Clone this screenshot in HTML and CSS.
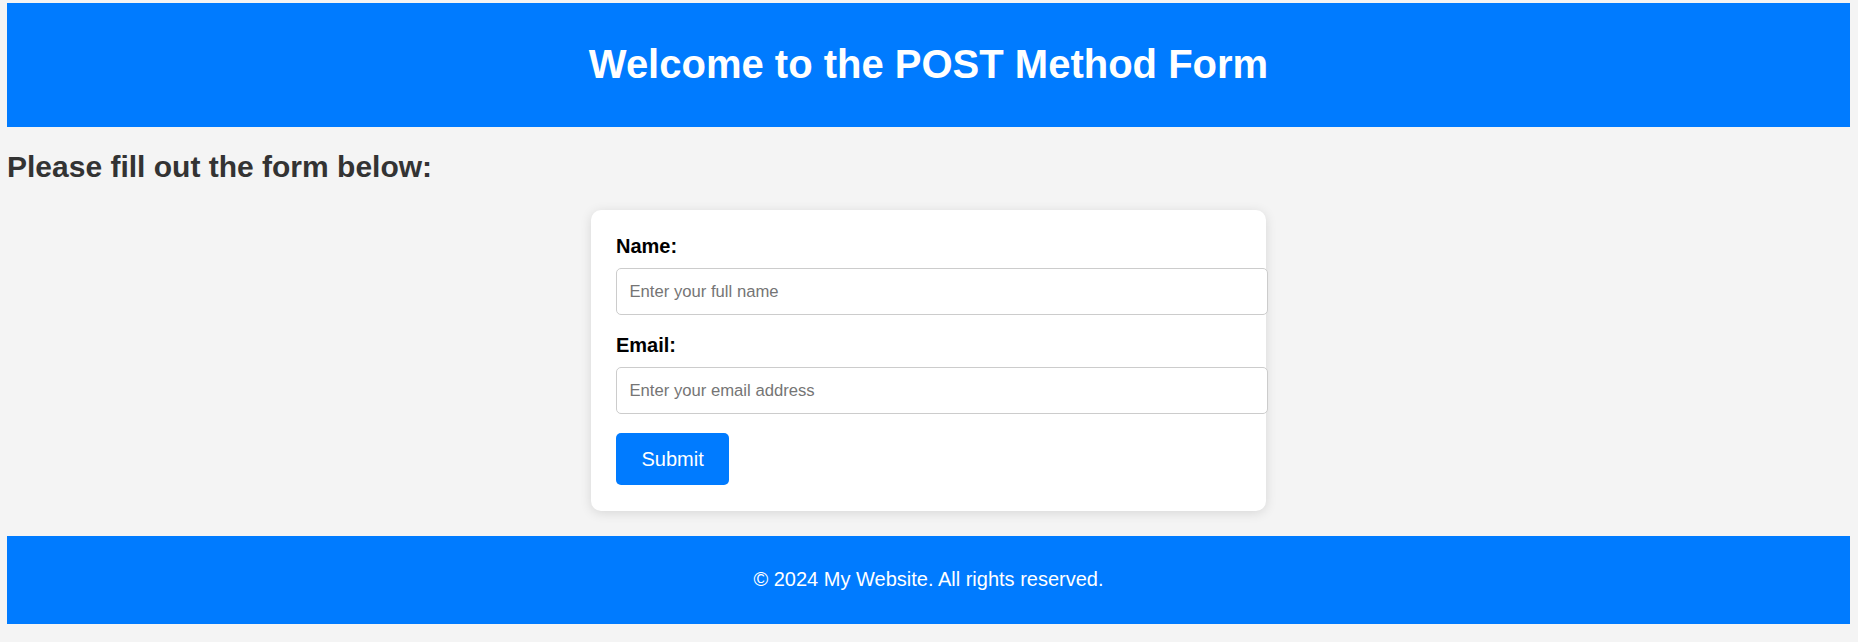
FILE: index.html
```html
<!DOCTYPE html>
<html lang="en">
<head>
<meta charset="utf-8">
<title>POST Method Form</title>
<link rel="stylesheet" href="styles.css">
</head>
<body>
  <header class="site-header">
    <h1 class="site-title">Welcome to the POST Method Form</h1>
  </header>
  <main class="main">
    <h2 class="intro">Please fill out the form below:</h2>
    <form class="card" method="post" action="#">
      <label class="field-label" for="name">Name:</label>
      <input class="field-input" type="text" id="name" name="name" placeholder="Enter your full name">
      <label class="field-label" for="email">Email:</label>
      <input class="field-input" type="email" id="email" name="email" placeholder="Enter your email address">
      <button class="submit-btn" type="submit">Submit</button>
    </form>
  </main>
  <footer class="site-footer">
    <p class="footer-text">&copy; 2024 My Website. All rights reserved.</p>
  </footer>
</body>
</html>
```

FILE: styles.css
```css
html, body {
  background: #f4f4f4;
}
body {
  margin: 3px 8px 0 7px;
  font-family: "Liberation Sans", Arial, sans-serif;
  color: #000;
}
.site-header {
  background: #007bff;
  color: #fff;
  text-align: center;
  padding: 38px 0 40px;
}
.site-title {
  margin: 0;
  font-size: 40px;
  line-height: 46px;
  font-weight: bold;
}
.intro {
  margin: 23px 0 26px;
  font-size: 30px;
  line-height: 34px;
  font-weight: bold;
  color: #333;
}
.card {
  width: 625px;
  margin: 0 auto;
  padding: 25px 25px 26px;
  background: #fff;
  border-radius: 10px;
  box-shadow: 0 2px 12px rgba(0, 0, 0, 0.12);
}
.field-label {
  display: block;
  font-size: 20px;
  line-height: 23px;
  font-weight: bold;
  margin-bottom: 10px;
}
.field-input {
  display: block;
  width: 100%;
  height: 21px;
  padding: 12px 12.5px;
  margin: 0 0 19px;
  border: 1px solid #ccc;
  border-radius: 5px;
  font-family: "Liberation Sans", Arial, sans-serif;
  font-size: 16.67px;
  color: #000;
  background: #fff;
  outline: none;
}
.field-input::placeholder {
  color: #757575;
}
.submit-btn {
  display: block;
  margin-top: 2px;
  padding: 14px 25.5px;
  border: none;
  border-radius: 5px;
  background: #007bff;
  color: #fff;
  font-family: "Liberation Sans", Arial, sans-serif;
  font-size: 20px;
  line-height: 24px;
  cursor: pointer;
}
.site-footer {
  margin-top: 25px;
  background: #007bff;
  color: #fff;
  text-align: center;
  padding: 32px 0 33px;
}
.footer-text {
  margin: 0;
  font-size: 20px;
  line-height: 23px;
}
```
